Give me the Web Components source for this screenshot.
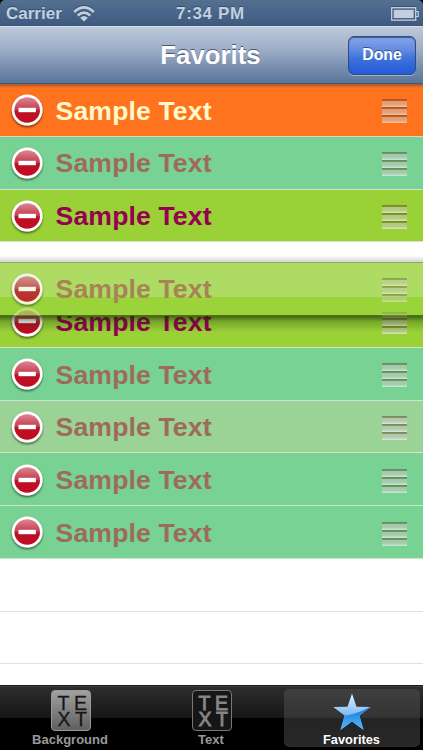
<!DOCTYPE html>
<html lang="en"><head><meta charset="utf-8"><title>Favorits</title>
<style>
html,body{margin:0;background:#000}
body{width:423px;height:750px;overflow:hidden;font-family:"Liberation Sans",Arial,sans-serif}
</style></head><body>
<phone-screen></phone-screen>
<script>
const define=(name,html,setup)=>customElements.define(name,class extends HTMLElement{
  connectedCallback(){
    if(this.shadowRoot)return;
    const t=document.createElement('template');t.innerHTML=html;
    this.attachShadow({mode:'open'}).appendChild(t.content.cloneNode(true));
    if(setup)setup(this,this.shadowRoot);
  }
});

define('status-bar',`<style>
:host{display:grid;grid-template-columns:1fr auto 1fr;align-items:center;height:26px;box-sizing:border-box;padding:2px 4px 0 6px;background:linear-gradient(#53708f,#4a678b 45%,#3e5a80);border-radius:5px 5px 0 0;color:#c3d0df;font-weight:bold;font-size:17px;text-shadow:0 -1px 0 #344d6d;border-bottom:1px solid #3b5476}
.l{display:flex;align-items:center;gap:11px}.r{justify-self:end;display:flex}
svg{display:block;filter:drop-shadow(0 -1px 0 #36506f)}
.c{letter-spacing:.65px;margin:0 4px 0 0}
</style><div class="l"><span>Carrier</span><svg width="22" height="16" viewBox="0 0 22 16" fill="none" stroke="#c3d0df" stroke-width="2.7"><path d="M1.2 5.9Q11-3 20.8 5.9M4.8 9.5Q11 3.8 17.2 9.5"/><path d="M7.1 11.8Q11 8.2 14.9 11.8L11 15.6Z" fill="#c3d0df" stroke="none"/></svg></div>
<span class="c">7:34 PM</span>
<div class="r"><svg width="28" height="14" viewBox="0 0 28 14"><rect x=".7" y=".7" width="24" height="12.4" fill="none" stroke="#c8d3e1" stroke-width="1.3"/><rect x="2.7" y="2.7" width="20" height="8.4" fill="#c3cfdf"/><path d="M25 4.5h2.2v5H25" fill="none" stroke="#c8d3e1" stroke-width="1.2"/></svg></div>`);

define('nav-bar',`<style>
:host{display:grid;grid-template-columns:1fr auto 1fr;align-items:center;height:58px;box-sizing:border-box;padding:0 7px;background:linear-gradient(#bcc9da,#a2b2cb 35%,#8195b4 65%,#59759b);border-top:1px solid #d7e0ea;border-bottom:1px solid #41587c}
h1{grid-column:2;margin:0 2px 0 0;color:#fff;font-size:25.8px;line-height:32px;text-shadow:0 -1px 0 #4c596d}
button{justify-self:end;width:68px;height:39px;margin:1px 0 0;padding:0 0 1px;border:1px solid #344c7e;border-radius:6px;background:linear-gradient(#87a6e6,#618be2 35%,#3c70dc 60%,#245bd7);box-shadow:inset 0 1px 1px #405b9d,0 1px 0 #a0b2ce;color:#fff;font:bold 15.8px "Liberation Sans",Arial,sans-serif;text-shadow:0 -1px 0 #345089}
</style><h1><slot></slot></h1><button>Done</button>`);

define('delete-control',`<style>:host{display:block;width:34px;height:36px}svg{display:block}</style>
<svg width="34" height="36" viewBox="0 0 34 36"><defs><linearGradient id="g" x1="0" y1="0" x2="0" y2="1"><stop stop-color="#db8795"/><stop offset=".48" stop-color="#c63b4d"/><stop offset=".53" stop-color="#bd1026"/><stop offset="1" stop-color="#c10c20"/></linearGradient><filter id="s" x="-20%" y="-20%" width="140%" height="150%"><feDropShadow dx="0" dy="1.4" stdDeviation=".9" flood-opacity=".65"/></filter></defs>
<circle cx="17.2" cy="17" r="15.4" fill="#fff" filter="url(#s)"/><circle cx="17.2" cy="17" r="12.8" fill="url(#g)"/><rect x="8.5" y="14.8" width="17.4" height="4.4" fill="#fff"/></svg>`);

define('drag-handle',`<style>:host{display:grid;width:25px;grid-auto-rows:8px;height:24px}i{display:block;background:linear-gradient(rgba(85,45,20,.42) 0 1.4px,rgba(200,190,190,.5) 2.2px,rgba(200,200,200,.62) 6px,rgba(255,255,255,.5) 7px 8px)}</style><i></i><i></i><i></i>`);

define('sample-row',`<style>
:host{display:flex;align-items:center;height:52.78px;box-sizing:border-box;padding:1.6px 16px 0 10px;background:var(--bg);color:var(--fg);border-bottom:1px solid rgba(225,232,225,.82)}
delete-control{margin-top:1px}
span{flex:1;margin-left:11.6px;font-size:26.6px;letter-spacing:.12px;line-height:30px;font-weight:bold;white-space:nowrap}
drag-handle{margin-top:1.5px}
:host([blank]){border-bottom-color:#e0e0e0}
:host([lifted]){height:54px;padding-top:0;border-top:1px solid #91a66a;border-bottom:1px solid #4e7118}
:host([lifted]) delete-control{opacity:.82}
:host([lifted]) drag-handle{opacity:.75}
</style>`,(h,r)=>{if(!h.hasAttribute('blank')){const t=document.createElement('template');t.innerHTML='<delete-control></delete-control><span><slot></slot></span><drag-handle></drag-handle>';r.appendChild(t.content.cloneNode(true));}});

define('favorites-list',`<style>
:host{display:block;height:601px;position:relative;background:#fff;overflow:hidden}
.rows{display:flex;flex-direction:column}sample-row{flex:none}
.top{position:absolute;inset:0 0 auto;height:4px;background:linear-gradient(rgba(60,50,60,.45),transparent)}
.drag{position:absolute;left:0;right:0;top:169px}
.drag:before,.drag:after{content:"";display:block;height:9px;background:linear-gradient(transparent 30%,rgba(0,0,0,.17))}
.drag:after{height:16px;background:linear-gradient(rgba(20,40,0,.65),rgba(20,40,0,.25) 35%,transparent)}
.under{display:block;position:absolute;left:10px;top:222px;opacity:.3;clip-path:inset(0 0 26px)}
.grip{position:absolute;left:382px;top:228px;opacity:.38;clip-path:inset(0 0 20px)}
</style><div class="rows">
<sample-row style="--bg:#ff731e;--fg:#fff8c8">Sample Text</sample-row>
<sample-row style="--bg:#78d293;--fg:#9e6b5b">Sample Text</sample-row>
<sample-row style="--bg:#99d137;--fg:#960050">Sample Text</sample-row>
<sample-row blank style="--bg:#fff"></sample-row>
<sample-row style="--bg:#99d137;--fg:#960050">Sample Text</sample-row>
<sample-row style="--bg:#78d293;--fg:#9e6b5b">Sample Text</sample-row>
<sample-row style="--bg:#9bd295;--fg:#9e6b5b">Sample Text</sample-row>
<sample-row style="--bg:#78d293;--fg:#9e6b5b">Sample Text</sample-row>
<sample-row style="--bg:#78d293;--fg:#9e6b5b">Sample Text</sample-row>
<sample-row blank></sample-row><sample-row blank></sample-row></div>
<div class="top"></div>
<div class="drag"><sample-row lifted style="--bg:linear-gradient(#aedb64 0 34px,#9bd33a 34px);--fg:#a68456">Sample Text</sample-row></div>
<delete-control class="under"></delete-control><drag-handle class="grip"></drag-handle>`);

define('tab-item',`<style>
:host{display:flex;flex-direction:column;align-items:center;box-sizing:border-box;padding-top:1px;color:#999;font-weight:bold;font-size:13px;border-radius:5px}
.i{height:42.4px;display:flex}span{line-height:15px}
:host([selected]){color:#fff;background:linear-gradient(#404040,#333 49%,#242424 50%,#282828)}
:host([selected]) span{font-size:12.8px;margin-right:1px}
</style><div class="i"><slot name="icon"></slot></div><span><slot></slot></span>`);

define('letter-tile',`<style>
:host{display:flex;align-items:center;box-sizing:border-box;width:40px;height:41px;margin-left:2px;padding:1px 0 0 5.5px;border:1px solid #999;border-radius:4px;background:linear-gradient(#a0a0a0,#606060);color:#171717;font-size:19.5px;line-height:16.5px}
b{font-weight:normal;letter-spacing:4.6px;white-space:nowrap;-webkit-text-stroke:.3px currentColor}
:host([outline]){background:#161616;border-color:#777;color:#858585}
:host([outline]) b{-webkit-text-stroke:.9px currentColor}
</style><b>TE<br>XT</b>`);

define('star-icon',`<style>:host,svg{display:block}</style><svg width="40" height="42" viewBox="0 0 40 42"><defs><linearGradient id="a" x1="0" y1="0" x2="0" y2="1"><stop stop-color="#f4faff"/><stop offset=".45" stop-color="#9bcaf5"/><stop offset="1" stop-color="#268bea"/></linearGradient><linearGradient id="b" x1="0" y1="0" x2="0" y2="1"><stop stop-color="#1272dc"/><stop offset="1" stop-color="#55c5ff"/></linearGradient><clipPath id="c"><path d="M20 3.5L24.5 16.8 38.8 17 27.4 25.5 31.6 40 20 31.5 8.4 40 12.6 25.5 1.2 17 15.5 16.8Z"/></clipPath></defs><g clip-path="url(#c)"><path d="M0 0H40V42H0Z" fill="url(#a)"/><path d="M0 27Q21 27 40 16V42H0Z" fill="url(#b)"/></g></svg>`);

define('tab-bar',`<style>
:host{display:grid;grid-template-columns:136px 136px 136px;column-gap:5px;height:65px;box-sizing:border-box;padding:3px 3px 3px 2px;border-top:1px solid #191919;background:linear-gradient(#3e3e3e 0 1px,#2d2d2d 1px,#161616 32px,#000 32px)}
</style><tab-item><letter-tile slot="icon"></letter-tile>Background</tab-item><tab-item><letter-tile outline slot="icon"></letter-tile>Text</tab-item><tab-item selected><star-icon slot="icon"></star-icon>Favorites</tab-item>`);

define('phone-screen',`<style>:host{display:flex;flex-direction:column;width:423px;height:750px}</style>
<status-bar></status-bar><nav-bar>Favorits</nav-bar><favorites-list></favorites-list><tab-bar></tab-bar>`);
</script></body></html>
